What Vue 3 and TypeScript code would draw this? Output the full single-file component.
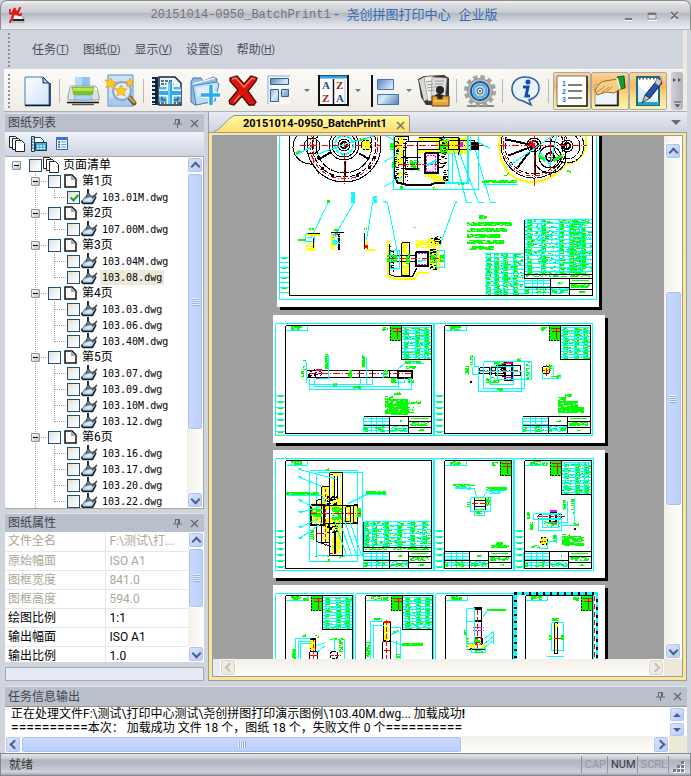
<script setup lang="ts">
import { ref } from 'vue'

interface TreeRow {
  level: 0 | 1 | 2
  label: string
  last?: boolean
  checked?: boolean
  selected?: boolean
}
interface Shape {
  d: string
  stroke: string
  fill: string
  width: number
  dash?: string
}

const pages: [string, string[]][] = [
  ['第1页', ['103.01M.dwg']],
  ['第2页', ['107.00M.dwg']],
  ['第3页', ['103.04M.dwg', '103.08.dwg']],
  ['第4页', ['103.03.dwg', '103.06.dwg', '103.40M.dwg']],
  ['第5页', ['103.07.dwg', '103.09.dwg', '103.10M.dwg', '103.12.dwg']],
  ['第6页', ['103.16.dwg', '103.17.dwg', '103.20.dwg', '103.22.dwg']],
]
const rows = ref<TreeRow[]>([{ level: 0, label: '页面清单' }])
for (const [name, files] of pages) {
  rows.value.push({ level: 1, label: name })
  files.forEach((f, i) =>
    rows.value.push({
      level: 2,
      label: f,
      last: i === files.length - 1,
      checked: f === '103.01M.dwg',
      selected: f === '103.08.dwg',
    }),
  )
}

const menus = [
  { name: '任务', key: 'T' },
  { name: '图纸', key: 'D' },
  { name: '显示', key: 'V' },
  { name: '设置', key: 'S' },
  { name: '帮助', key: 'H' },
]

const props = [
  { name: '文件全名', value: 'F:\\测试\\打...', locked: true },
  { name: '原始幅面', value: 'ISO A1', locked: true },
  { name: '图框宽度', value: '841.0', locked: true },
  { name: '图框高度', value: '594.0', locked: true },
  { name: '绘图比例', value: '1:1', locked: false },
  { name: '输出幅面', value: 'ISO A1', locked: false },
  { name: '输出比例', value: '1.0', locked: false },
]

/* Scroll ranges: space before the thumb, the thumb, space after it */
const scroll = {
  tree: [0, 255, 62],
  props: [0, 58, 38],
  view: [132, 213, 137],
  log: [0, 440, 191],
}

/* ---------- sheet drawing ---------- */
const C = '#00ffff'
const K = '#000000'
const G = '#00ff00'
const R = '#ff0000'
const Y = '#ffff00'
const M = '#ff00ff'
const shapes: Shape[] = []

let seed = 7
function rnd(): number {
  seed = (seed * 16807) % 2147483647
  return seed / 2147483647
}
function path(color: string, d: string, width = 1, dash?: string) {
  shapes.push({ d, stroke: color, fill: 'none', width, dash })
}
function line(color: string, pts: number[], width = 1, dash?: string) {
  let d = ''
  for (let i = 0; i < pts.length; i += 2) d += (i ? 'L' : 'M') + (pts[i] + 0.5) + ' ' + (pts[i + 1] + 0.5)
  path(color, d, width, dash)
}
function box(color: string, x0: number, y0: number, x1: number, y1: number, width = 1, dash?: string) {
  line(color, [x0, y0, x1, y0, x1, y1, x0, y1, x0, y0], width, dash)
}
function fill(color: string, x: number, y: number, w: number, h: number) {
  shapes.push({ d: `M${x} ${y}h${w}v${h}h${-w}z`, stroke: 'none', fill: color, width: 0 })
}
function circle(color: string, cx: number, cy: number, r: number, width = 1, dash?: string) {
  path(color, `M${cx - r} ${cy}a${r} ${r} 0 1 0 ${2 * r} 0a${r} ${r} 0 1 0 ${-2 * r} 0`, width, dash)
}
/* Speckled run of pixels: lettering and hatching at this scale */
function speck(color: string, x: number, y: number, w: number, h: number, density = 0.7) {
  let d = ''
  for (let j = 0; j < h; j++) {
    let i = 0
    while (i < w) {
      const n = Math.min(w - i, 1 + Math.floor(rnd() * 3))
      if (rnd() < density) d += `M${x + i} ${y + j + 0.5}h${n}`
      i += n
    }
  }
  path(color, d)
}
function table(x0: number, y0: number, x1: number, y1: number, step: number, cols: number[]) {
  for (const c of cols) speck(G, x0 + c, y0 + 1, 4, y1 - y0 - 1, 0.72)
  speck(G, x0 + 1, y0 + 1, x1 - x0 - 1, y1 - y0 - 1, 0.15)
  for (let y = y0; y <= y1; y += step) line(C, [x0, y, x1, y])
  for (const c of cols) line(C, [x0 + c - 1, y0, x0 + c - 1, y1])
}
function titleBlock(x1: number, y1: number, extra: boolean) {
  const x0 = x1 - 68
  const y0 = y1 - 17
  for (let y = y0 + 2; y < y1; y += 3) line(C, [x0, y, x0 + 26, y])
  for (const c of [0, 8, 13, 19]) line(C, [x0 + c, y0, x0 + c, y1])
  speck(C, x0 + 27, y0 + 10, 18, 6, 0.5)
  speck(G, x0 + 1, y0 + 11, 4, 5, 0.7)
  speck(G, x0 + 12, y0 + 10, 10, 6, 0.35)
  speck(G, x0 + 34, y0 + 4, 5, 2)
  speck(G, x0 + 28, y0 + 12, 16, 3, 0.5)
  line(G, [x0 + 47, y0 + 2, x1 - 4, y0 + 2])
  speck(G, x0 + 47, y0 + 6, 19, 4, 0.65)
  speck(G, x0 + 55, y0 + 13, 6, 2)
  line(K, [x0, y0, x1, y0])
  line(K, [x0, y0 + 9, x0 + 45, y0 + 9])
  line(K, [x0 + 26, y0, x0 + 26, y1])
  line(K, [x0 + 45, y0, x0 + 45, y1])
  line(K, [x0 + 45, y0 + 5, x1, y0 + 5])
  line(K, [x0 + 45, y0 + 11, x1, y0 + 11])
  if (extra) {
    speck(G, x0 + 2, y0 - 3, 64, 2, 0.5)
    line(K, [x0, y0 - 4, x1, y0 - 4])
  }
}
/* A bordered drawing: outer trim line, inner frame, side strip and title block */
function frame(x: number, y: number, outer: number, x1: number, gear: 'table' | 'stamp' | 'none', extra = false) {
  const y1 = y + 110
  box(C, x, y, outer, y + 112)
  for (let i = 0; i < 7; i++) {
    line(C, [x, y + 72 + i * 6, x + 10, y + 72 + i * 6])
    line(G, [x + 2, y + 73 + i * 6, x + 7, y + 73 + i * 6])
  }
  line(C, [x + 10, y + 7, x + 32, y + 7, x + 32, y + 2])
  speck(G, x + 16, y + 3, 11, 4, 0.75)
  if (gear !== 'none') {
    const sx = gear === 'table' ? x1 - 41 : x1 - 11
    fill(G, sx, y + 3, 11, 15)
    line(R, [sx + 1, y + 5, sx + 10, y + 5])
    line(R, [sx + 2, y + 8, sx + 10, y + 8])
    line(R, [sx + 7, y + 4, sx + 7, y + 15])
    line(K, [sx, y + 3, sx, y + 17, sx + 10, y + 17], 1, '2 1')
    speck(G, sx - 8, y + 4, 6, 4, 0.7)
  }
  if (gear === 'table') {
    table(x1 - 30, y + 4, x1, y + 36, 3, [4, 15, 24])
    line(K, [x1 - 30, y + 2, x1 - 30, y + 36, x1, y + 36])
  }
  titleBlock(x1, y1, extra)
  box(K, x + 10, y + 2, x1, y1)
}
function sheet(x: number, y: number, w: number, h: number) {
  fill(K, x + 3, y + 3, w, h)
  fill('#ffffff', x, y, w, h)
}

/* Sheet 1: gearbox assembly */
sheet(277, 100, 322, 207)
line(C, [279, 130, 279, 299, 596, 299, 596, 130])
for (let i = 0; i < 8; i++) {
  line(C, [279, 257 + i * 5, 289, 257 + i * 5])
  if (i % 2 === 0) line(G, [281, 258 + i * 5, 286, 258 + i * 5], 1)
}
circle(K, 344, 145, 37)
circle(K, 344, 145, 28, 1, '9 1')
circle(K, 344, 145, 32, 1, '5 2')
circle(R, 344, 145, 34, 1, '5 2 1 2')
circle(K, 344, 145, 15)
circle(K, 344, 145, 12)
circle(C, 344, 145, 9, 2, '4 1')
circle(K, 344, 145, 6)
circle(K, 344, 145, 3, 2)
path(K, 'M304 130A19 19 0 0 0 293 148C294 158 303 165 313 164L319 174')
circle(K, 312, 146, 8)
path(R, 'M313 130V163', 1, '5 2')
line(K, [344, 160, 344, 175], 2)
line(K, [330, 152, 318, 159], 2)
line(K, [359, 153, 369, 159], 2)
for (const [a, b] of [[318, 157], [322, 168], [332, 175], [357, 175], [369, 167], [374, 157]]) fill(K, a - 1, b - 1, 3, 3)
line(R, [299, 145, 380, 145], 1, '6 2 1 2')
line(R, [344, 130, 344, 184], 1, '6 2 1 2')
speck(Y, 362, 141, 9, 9, 0.9)
circle(K, 366, 145, 5, 1, '3 1')
line(C, [296, 154, 312, 146])
line(C, [316, 154, 344, 144, 382, 133])
line(G, [296, 153, 300, 150], 2)
speck(G, 360, 138, 6, 3)

box(C, 393, 130, 478, 189)
speck(Y, 396, 137, 8, 27, 0.85)
speck(Y, 418, 137, 50, 17, 0.85)
speck(Y, 424, 153, 13, 24, 0.8)
speck(Y, 431, 176, 15, 8, 0.8)
speck(Y, 398, 164, 7, 17, 0.5)
speck(G, 390, 143, 4, 7, 0.9)
speck(G, 392, 162, 4, 6, 0.9)
speck(G, 410, 160, 10, 11, 0.6)
speck(G, 440, 138, 8, 16, 0.6)
speck(K, 394, 136, 5, 44, 0.3)
speck(K, 403, 137, 5, 44, 0.3)
speck(K, 439, 136, 8, 33, 0.2)
speck(K, 443, 170, 5, 13, 0.45)
line(K, [394, 136, 408, 136, 408, 141])
line(K, [394, 136, 394, 176])
line(K, [403, 150, 403, 182])
fill('#ffffff', 409, 142, 27, 7)
box(K, 405, 141, 417, 169)
box(K, 417, 141, 439, 149)
fill('#ffffff', 425, 153, 12, 20)
box(K, 424, 152, 437, 172, 2)
box(K, 448, 140, 474, 149)
line(K, [458, 137, 458, 154], 2)
line(K, [418, 137, 458, 137])
line(K, [394, 176, 397, 182, 405, 184, 431, 184, 436, 182, 445, 182], 2)
line(K, [400, 157, 420, 157])
line(K, [400, 168, 418, 168])
fill(K, 470, 142, 9, 8)
line(R, [394, 145, 482, 145], 1, '7 2 1 2')
line(R, [397, 164, 438, 164], 1, '5 1')
box(M, 426, 155, 435, 171, 1, '2 1')
fill(M, 460, 142, 3, 5)
line(C, [426, 165, 436, 160], 2)
box(C, 448, 153, 452, 182)
line(C, [467, 130, 467, 182, 444, 182], 2)
line(C, [470, 130, 470, 150])
for (const [a, b, c2] of [[466, 202, 453], [478, 202, 458], [490, 202, 475]]) line(C, [c2, 150, a, b, a + 5, b])
line(C, [384, 135, 393, 139])
line(C, [384, 161, 399, 153])
line(C, [384, 186, 402, 176])
line(C, [478, 142, 490, 148])
speck(G, 482, 180, 35, 3, 0.9)
line(C, [482, 184, 517, 184])
speck(G, 400, 186, 3, 3)
speck(G, 433, 187, 5, 3)
speck(G, 458, 183, 6, 2)

path(Y, 'M500 136C498 151 500 164 510 174C521 184 539 184 551 177C560 172 562 168 567 164C578 163 586 153 586 143V134', 2)
circle(K, 534, 145, 33, 1, '10 1')
circle(K, 534, 145, 29, 1, '4 2')
circle(R, 534, 145, 31, 1, '5 2 1 2')
circle(K, 534, 145, 7)
circle(K, 534, 145, 4, 2)
circle(K, 550, 157, 16)
circle(K, 550, 157, 11)
circle(K, 550, 157, 4, 2)
circle(K, 567, 146, 17, 1, '8 1')
circle(K, 567, 146, 13, 1, '7 1')
circle(K, 567, 146, 6)
circle(K, 567, 146, 3, 2)
for (const [a, b] of [[506, 139], [508, 155], [517, 167], [534, 174]]) line(K, [534, 145, a, b], 2)
line(R, [499, 145, 586, 145], 1, '7 2 1 2')
line(R, [534, 130, 534, 185], 1, '7 2 1 2')
line(R, [550, 136, 550, 176], 1, '5 2')
line(R, [540, 157, 562, 157], 1, '5 2')
speck(R, 529, 141, 6, 8, 0.6)
line(G, [538, 155, 545, 160], 3)
line(G, [553, 160, 562, 155], 3)
line(C, [506, 167, 560, 130])
line(C, [538, 150, 551, 166])
line(C, [549, 167, 556, 136])
speck(G, 504, 173, 5, 3, 0.5)
speck(G, 567, 170, 4, 3, 0.5)

line(C, [328, 201, 311, 237, 306, 237])
line(C, [353, 203, 336, 232])
line(C, [375, 201, 372, 202, 366, 240])
line(C, [383, 201, 387, 202, 398, 257])
line(C, [457, 201, 455, 202, 438, 249])
speck(C, 351, 192, 4, 11, 0.9)
speck(C, 372, 196, 5, 7, 0.7)
speck(G, 327, 200, 3, 3, 0.9)
line(G, [308, 228, 313, 228], 2, '2 1')
line(G, [333, 229, 338, 229], 2)
line(G, [363, 228, 366, 228], 2, '1 1')
line(G, [412, 227, 415, 227], 1, '1 1')
box(C, 305, 233, 314, 241)
line(Y, [305, 234, 319, 234], 2)
speck(Y, 305, 243, 10, 8, 0.65)
line(K, [307, 233, 319, 233])
line(K, [313, 237, 313, 247])
line(G, [297, 239, 305, 239], 2)
speck(Y, 331, 232, 4, 19, 0.8)
speck(Y, 335, 232, 5, 4, 0.8)
line(K, [330, 232, 343, 232])
line(K, [338, 233, 338, 249], 2)
line(M, [334, 233, 337, 233], 2)
speck(C, 332, 233, 8, 12, 0.4)
line(K, [364, 232, 364, 248], 1)
line(Y, [366, 240, 366, 249, 374, 249], 2)
speck(R, 364, 245, 4, 4, 0.5)

line(Y, [387, 239, 387, 275, 393, 278, 414, 278, 418, 272, 428, 272], 2)
line(K, [389, 243, 389, 274, 395, 276, 412, 276, 416, 268])
speck(Y, 401, 242, 9, 33, 0.6)
speck(Y, 416, 240, 13, 8, 0.75)
speck(Y, 428, 238, 12, 32, 0.7)
box(K, 401, 242, 409, 275, 1)
box(K, 415, 251, 427, 265, 2)
box(K, 396, 255, 415, 261)
speck(K, 390, 246, 4, 26, 0.5)
speck(K, 431, 236, 10, 8, 0.45)
speck(K, 430, 249, 7, 21, 0.45)
speck(G, 387, 255, 10, 7, 0.7)
speck(G, 406, 254, 4, 10, 0.7)
speck(G, 430, 254, 7, 9, 0.7)
speck(G, 440, 254, 4, 8, 0.8)
box(C, 390, 250, 399, 268)
box(C, 436, 250, 444, 267)
line(M, [417, 253, 426, 253], 1, '2 1')
line(M, [417, 264, 426, 264], 1, '2 1')
line(R, [388, 258, 440, 258], 1, '6 2 1 2')
line(C, [418, 261, 425, 259], 2)

speck(G, 479, 215, 8, 4, 0.7)
for (const [ty, tx, tw] of [[222, 467, 45], [228, 467, 40], [234, 467, 33], [240, 467, 37], [246, 469, 25]]) speck(G, tx, ty, tw, 4, 0.8)
speck(C, 525, 220, 67, 54, 0.08)
speck(G, 573, 220, 9, 54, 0.6)
table(524, 219, 592, 274, 4, [4, 18, 36, 46, 58])
line(K, [524, 219, 524, 295])
table(484, 253, 523, 295, 4, [3, 11, 20, 30])
titleBlock(592, 295, true)
line(K, [289, 130, 289, 295, 592, 295, 592, 130])

/* Sheet 2: shaft and gear shaft */
sheet(273, 315, 332, 128)
frame(275, 323, 433, 431, 'table')
frame(434, 323, 592, 590, 'table')
box(K, 306, 370, 411, 377)
speck(K, 308, 369, 4, 9, 0.4)
speck(K, 314, 369, 8, 9, 0.4)
box(K, 397, 370, 411, 377, 2)
for (const a of [372, 359, 389]) line(K, [a, 370, a, 377])
line(R, [308, 373, 413, 373], 1, '7 2 1 2')
line(R, [315, 369, 321, 369])
line(M, [315, 370, 321, 370])
line(M, [315, 378, 321, 378])
line(C, [309, 378, 309, 389, 411, 389, 411, 378])
line(C, [314, 378, 314, 386, 398, 386, 398, 378])
line(C, [360, 378, 360, 384, 309, 384])
line(C, [306, 361, 306, 382])
line(C, [328, 354, 328, 378, 318, 378])
line(C, [366, 356, 366, 384])
line(C, [372, 377, 372, 384, 360, 384])
line(C, [383, 370, 383, 377])
line(C, [397, 369, 404, 363, 423, 363])
line(C, [390, 382, 404, 382, 404, 377])
speck(G, 303, 360, 3, 10)
speck(G, 325, 354, 3, 15)
speck(G, 362, 355, 3, 13)
speck(G, 301, 371, 3, 6)
speck(G, 348, 370, 3, 7)
speck(G, 350, 370, 2, 8)
speck(G, 384, 370, 4, 7)
speck(G, 333, 383, 4, 3)
speck(G, 353, 386, 8, 3)
speck(G, 405, 361, 16, 3)
speck(G, 406, 366, 10, 3)
speck(G, 391, 378, 5, 5)
speck(G, 408, 378, 6, 5, 0.5)
speck(G, 394, 392, 7, 3)
speck(G, 385, 396, 8, 4, 0.8)
speck(G, 385, 399, 23, 16, 0.85)
speck(G, 407, 401, 14, 3)
speck(G, 407, 407, 7, 6, 0.6)

box(K, 479, 367, 503, 373)
box(K, 504, 361, 511, 379, 2)
box(K, 489, 367, 491, 374, 1)
box(K, 495, 365, 520, 375)
speck(K, 500, 363, 4, 14, 0.4)
line(M, [503, 363, 512, 363])
line(M, [503, 377, 512, 377])
line(R, [505, 362, 511, 362])
line(R, [478, 370, 522, 370], 1, '6 2 1 2')
box(C, 478, 371, 521, 391)
box(C, 483, 361, 524, 388)
box(C, 490, 366, 513, 384)
box(C, 497, 361, 531, 379)
box(C, 472, 366, 478, 374)
line(C, [474, 355, 474, 366])
speck(G, 470, 355, 3, 11)
speck(G, 465, 366, 4, 9)
speck(G, 526, 362, 4, 17, 0.6)
speck(G, 517, 358, 4, 4)
speck(G, 497, 388, 6, 3)
speck(G, 486, 377, 14, 8, 0.4)
speck(G, 494, 361, 10, 4, 0.5)
fill(K, 470, 381, 2, 2)
speck(Y, 543, 366, 7, 8, 0.95)
circle(K, 546, 370, 4, 1)
line(R, [546, 364, 546, 376], 1, '2 1')
line(R, [542, 370, 551, 370], 1, '2 1')
line(C, [542, 371, 542, 378, 560, 378])
line(C, [551, 366, 553, 366, 553, 374])
speck(G, 549, 364, 3, 5)
speck(G, 551, 375, 10, 3, 0.6)
speck(G, 565, 394, 7, 3)
speck(G, 558, 397, 8, 6, 0.8)
speck(G, 558, 401, 20, 12, 0.8)
speck(G, 558, 407, 26, 6, 0.8)

/* Sheet 3: wheel assembly, nut and pinion */
sheet(273, 450, 332, 128)
table(363, 521, 431, 547, 4, [2, 10, 22, 35, 48, 60])
line(K, [363, 521, 363, 568])
frame(275, 458, 433, 431, 'none', true)
frame(434, 458, 513, 511, 'stamp')
frame(514, 458, 593, 591, 'table')
box(C, 309, 470, 357, 561)
box(C, 316, 472, 362, 555)
speck(Y, 322, 487, 8, 54, 0.8)
speck(Y, 332, 473, 9, 80, 0.85)
speck(Y, 312, 503, 32, 20, 0.85)
speck(Y, 342, 505, 14, 18, 0.8)
fill('#ffffff', 334, 475, 6, 22)
fill('#ffffff', 317, 526, 6, 14)
fill('#ffffff', 320, 510, 28, 8)
box(K, 329, 472, 342, 555, 1)
box(K, 321, 486, 329, 542, 1)
box(K, 310, 504, 323, 524, 2)
box(K, 323, 505, 357, 523, 1)
box(K, 345, 506, 350, 521, 1)
box(K, 353, 504, 357, 522)
line(K, [316, 503, 316, 500, 322, 498])
line(K, [316, 524, 316, 541, 331, 546])
line(K, [334, 475, 334, 498])
line(K, [337, 475, 337, 498])
line(K, [334, 530, 334, 553], 2)
speck(K, 327, 496, 10, 9, 0.5)
speck(K, 327, 522, 11, 11, 0.5)
speck(G, 311, 509, 11, 8, 0.75)
speck(G, 332, 507, 10, 13, 0.7)
speck(G, 357, 508, 4, 9, 0.9)
line(R, [309, 513, 360, 513], 1, '7 2 1 2')
line(R, [325, 488, 325, 545], 1, '3 2')
line(R, [315, 533, 323, 533])
line(R, [328, 474, 332, 474])
line(R, [328, 553, 332, 553])
for (const [a, b, c2, e] of [[299, 469, 337, 479], [299, 477, 321, 486], [299, 500, 312, 506], [299, 512, 320, 506], [299, 527, 318, 518], [299, 538, 322, 522]]) line(C, [a, b, c2, e])
for (const a of [469, 477, 500, 512, 527, 538]) line(C, [298, a - 1, 302, a])
for (const a of [346, 351, 356, 361]) line(C, [a - 12, 520, a, 555])
line(C, [348, 503, 366, 494, 386, 494])
line(C, [286, 495, 321, 495, 327, 505])
speck(G, 286, 492, 33, 3, 0.9)
speck(G, 366, 491, 20, 3, 0.9)
speck(G, 310, 530, 4, 10, 0.5)
speck(G, 325, 559, 5, 3)
speck(G, 315, 556, 33, 2, 0.3)
speck(G, 325, 468, 4, 3)

fill('#ffffff', 475, 500, 10, 7)
line(Y, [475, 498, 485, 498], 2, '3 1')
line(Y, [475, 508, 485, 508], 2, '3 1')
box(K, 474, 497, 485, 509, 1)
line(K, [474, 500, 485, 500])
line(K, [474, 506, 485, 506])
line(R, [471, 503, 488, 503], 1, '6 2')
box(C, 470, 497, 490, 511)
box(C, 474, 509, 484, 515)
line(C, [455, 488, 474, 488, 476, 497])
line(C, [481, 499, 487, 490, 505, 490])
speck(G, 453, 484, 22, 3, 0.75)
speck(G, 486, 487, 21, 3, 0.75)
speck(C, 455, 487, 16, 3, 0.4)
speck(C, 489, 490, 12, 4, 0.4)
speck(G, 467, 501, 3, 6)
speck(G, 476, 511, 6, 3)
speck(G, 486, 497, 4, 10, 0.5)
speck(G, 496, 542, 7, 3)
speck(G, 491, 545, 18, 3, 0.8)

box(K, 549, 512, 555, 521, 2)
line(M, [549, 510, 556, 510], 2)
line(M, [549, 522, 556, 522], 2)
box(K, 538, 514, 561, 519, 1, '3 2')
line(R, [536, 516, 564, 516], 1, '5 1')
box(C, 533, 513, 560, 519)
box(C, 538, 518, 561, 530)
box(C, 542, 514, 558, 527)
line(C, [567, 500, 567, 522, 557, 522])
line(C, [574, 497, 574, 522])
line(C, [560, 525, 578, 525])
speck(G, 563, 500, 3, 10)
speck(G, 571, 499, 3, 15)
speck(G, 527, 512, 3, 7)
speck(G, 530, 521, 3, 9)
speck(G, 544, 521, 16, 6, 0.4)
speck(G, 573, 523, 6, 3)
fill(K, 574, 528, 2, 2)
speck(Y, 541, 538, 7, 7, 0.9)
circle(K, 544, 541, 4, 1, '2 2')
line(R, [540, 541, 549, 541], 1, '2 1')
line(C, [538, 548, 547, 548, 547, 541, 556, 541])
line(C, [556, 534, 556, 542])
speck(G, 531, 545, 9, 3)
speck(G, 553, 534, 3, 7)
speck(G, 562, 534, 8, 12, 0.8)
speck(G, 568, 536, 16, 10, 0.65)

/* Sheet 4: pins and bushes; the last drawing is selected */
sheet(273, 585, 332, 128)
frame(275, 593, 353, 352, 'table')
frame(355, 593, 433, 432, 'table')
frame(435, 593, 513, 512, 'none')
frame(515, 593, 593, 592, 'stamp')
box(K, 310, 640, 315, 651)
speck(Y, 309, 640, 6, 10, 0.85)
fill('#ffffff', 309, 651, 9, 10)
box(K, 309, 651, 317, 662, 1)
line(R, [309, 655, 317, 655])
line(R, [313, 637, 313, 662], 1, '4 2')
fill(K, 310, 638, 6, 2)
line(C, [295, 662, 295, 638, 310, 638])
line(C, [298, 662, 298, 641, 310, 641])
line(C, [300, 662, 300, 643, 310, 643])
line(C, [316, 645, 325, 642])
line(C, [316, 652, 325, 645])
line(C, [344, 638, 344, 662])
line(C, [334, 638, 334, 652])
circle(K, 334, 655, 4, 1, '3 1')
line(R, [329, 655, 340, 655], 1, '4 1')
speck(G, 302, 634, 4, 3)
speck(G, 315, 635, 4, 3)
speck(G, 292, 649, 4, 11)
speck(G, 330, 638, 14, 2, 0.7)
speck(G, 339, 640, 4, 12, 0.6)

box(K, 383, 622, 390, 640)
speck(Y, 384, 623, 5, 18, 0.8)
fill(R, 383, 621, 8, 2)
box(K, 382, 641, 390, 662, 1)
line(R, [386, 619, 386, 662], 1, '5 2')
line(R, [383, 650, 390, 650])
line(C, [370, 662, 370, 621, 383, 621])
line(C, [373, 662, 373, 625, 383, 625])
line(C, [390, 627, 400, 627, 400, 662])
line(C, [391, 634, 399, 630])
line(C, [391, 641, 403, 645])
line(C, [396, 640, 396, 662])
speck(G, 374, 618, 8, 3, 0.8)
speck(G, 366, 642, 4, 15)
speck(G, 393, 630, 5, 3)
speck(G, 402, 643, 21, 3, 0.9)
speck(G, 396, 652, 4, 6)

box(K, 474, 608, 481, 637)
fill(K, 474, 607, 8, 3)
line(K, [474, 620, 481, 620], 2)
line(M, [472, 627, 483, 627], 1, '4 1')
line(M, [472, 630, 483, 630], 1, '4 1')
line(K, [475, 637, 475, 643, 471, 648, 484, 648, 481, 643, 481, 637], 2)
speck(R, 474, 637, 8, 8, 0.4)
speck(Y, 470, 644, 5, 4, 0.8)
speck(Y, 482, 644, 5, 4, 0.8)
line(R, [477, 609, 477, 647], 1, '5 2')
box(C, 466, 608, 474, 643)
line(C, [466, 621, 474, 621])
box(C, 471, 648, 485, 652)
line(C, [482, 617, 487, 610, 505, 610])
for (const a of [632, 637, 641]) line(C, [484, a + 6, 493, a - 1])
line(C, [493, 630, 493, 643])
speck(G, 487, 609, 19, 2, 0.9)
speck(G, 464, 630, 2, 5)
speck(G, 466, 638, 3, 12, 0.7)
speck(G, 475, 650, 8, 3, 0.7)
speck(G, 474, 639, 7, 6, 0.4)

box(C, 551, 622, 563, 650)
box(K, 554, 622, 557, 653, 1)
line(Y, [555, 625, 555, 650])
line(Y, [556, 623, 556, 626], 2)
line(R, [553, 638, 562, 638])
line(C, [546, 656, 563, 656])
speck(G, 552, 618, 7, 3)
speck(G, 549, 635, 3, 6)
speck(G, 561, 635, 3, 6)
line(R, [594, 595, 594, 662], 1, '5 3')
line(K, [515, 662, 515, 593, 595, 593], 3)
line(K, [596, 593, 596, 662], 2)
line(C, [515, 662, 515, 593, 597, 593], 3, '5 2')
line(C, [596, 593, 596, 662], 2, '5 3')
</script>

<template>
  <div class="app">
    <header class="titlebar">
      <svg class="logo" viewBox="0 0 16 16" width="16" height="16">
        <path d="M5 8h7l3 4v3H3z" fill="#eee" stroke="#777" stroke-width=".7" />
        <path d="M4 12h11v2H4z" fill="#222" />
        <path d="M1 3c-1 4 1 5 3 2L6 1C5 6 3 12 1 15M7 4c-1 4 1 4 2 1l2-4M9 5c0 4 2 4 3 2" fill="none" stroke="#e01414" stroke-width="2" stroke-linecap="round" />
      </svg>
      <h1 class="caption"><span class="doc">20151014-0950_BatchPrint1</span><span class="dash">-</span><span>尧创拼图打印中心</span><span>企业版</span></h1>
      <div class="winbtns">
        <button aria-label="最小化"><svg viewBox="0 0 12 12" width="12" height="12"><path d="M2 9h7" stroke="#777" stroke-width="2" /><path d="M2 10.500h7" stroke="#fff" /></svg></button>
        <button aria-label="最大化"><svg viewBox="0 0 12 12" width="12" height="12"><path d="M2 3h8v6H2z" fill="#ddd" stroke="#888" /><path d="M2 4h8" stroke="#777" stroke-width="2" /><path d="M2 10.500h9" stroke="#fff" /></svg></button>
        <button aria-label="关闭"><svg viewBox="0 0 12 12" width="12" height="12"><path d="M2 3l7 7M9 3l-7 7" stroke="#fff" stroke-width="2" /><path d="M2 2l7 7M9 2l-7 7" stroke="#777" stroke-width="2" /></svg></button>
      </div>
    </header>

    <nav class="menubar">
      <span class="grip"></span>
      <button v-for="m in menus" :key="m.key" class="menu">{{ m.name }}<small>(<u>{{ m.key }}</u>)</small></button>
    </nav>

    <div class="toolbar">
      <span class="grip"></span>
      <button class="tool" aria-label="新建">
        <svg viewBox="0 0 32 32"><defs><linearGradient id="paper" x1="0" y1="0" x2="1" y2="1"><stop offset="0" stop-color="#fff" /><stop offset="1" stop-color="#cfe2f8" /></linearGradient></defs><path d="M4 2h18l6 6v22H4z" fill="url(#paper)" stroke="#3b7cc9" /><path d="M4 30.500h25V8" fill="none" stroke="#0a1a3a" stroke-width="1.500" /><path d="M22 2v6h6z" fill="#9cc8ee" stroke="#112a58" /></svg>
      </button>
      <i class="sep"></i>
      <button class="tool" aria-label="打印">
        <svg viewBox="0 0 32 32"><path d="M8 2h15v12H8z" fill="#8fc4ee" /><path d="M8 2h7v12H8z" fill="#b5dbf7" /><path d="M3 13q0-2 2-2h22q2 0 3 2l2 8v4H1v-4z" fill="#e2e2e4" stroke="#8c8c90" stroke-width=".8" /><path d="M5 12h22l-1 8H6z" fill="#7fc320" /><path d="M6 13h20l-.5 3h-19z" fill="#b6e35a" /><path d="M8 20h16l1 5H7z" fill="#a9d4f4" stroke="#5d97cc" stroke-width=".6" /><path d="M27 14h3" stroke="#fff" stroke-width="2" /><path d="M0 27.500h32" stroke="#111" stroke-width="1.500" /><path d="M5 29.500h22" stroke="#555" stroke-width="1.500" /></svg>
      </button>
      <button class="tool" aria-label="打印预览">
        <svg viewBox="0 0 32 32"><path d="M3 0h25v31H3z" fill="#cfe0f7" stroke="#4f8fd8" /><path d="M4 24l24-9v15H4z" fill="#a7c8f0" /><path d="M25 23l4 5" stroke="#5e5a50" stroke-width="5" stroke-linecap="round" /><path d="M25 23l4 4" stroke="#d79a35" stroke-width="2.500" stroke-linecap="round" /><circle cx="17" cy="16" r="9" fill="#dcecfb" stroke="#8aa3c0" stroke-width="2" /><g fill="#fdc91a" stroke="#e0950a" stroke-width=".6"><path d="M6 3l1.500 3.500L12 7 8.500 9.500 10 14l-4.500-2.500L1 13l1.500-4.500L0 5l4 .5z" /><path d="M16 10l2 3.500 4 .5-3 3 1 4-4-2-4 2 1-4-3-3 4-.5z" /><path d="M25 3l1 3 3 .5-2 2 .5 3-2.500-1.500-3 1.500.5-3-2-2 3-.5z" /></g></svg>
      </button>
      <i class="sep"></i>
      <button class="tool" aria-label="添加图纸">
        <svg viewBox="0 0 32 32"><path d="M0 1h31v30H0z" fill="#fff" /><path d="M1 2h6v28H1z" fill="#152636" /><path d="M2.500 4v25" stroke="#d8edf8" stroke-width="3" stroke-dasharray="2 2" /><path d="M8 2h16l6 6v22H8z" fill="#e9f5fb" stroke="#152636" stroke-width="1.500" /><path d="M8 12h22v15H8z" fill="#5fb2dc" /><path d="M10 6h11M10 9h13M10 28h19" stroke="#2b4a60" stroke-width="1.500" stroke-dasharray="3 1" /><path d="M11 16v9h16v-9" fill="none" stroke="#184563" /><path d="M19 7v22M8 18h22" stroke="#fff" stroke-width="7" /><path d="M19 7v22M8 18h22" stroke="#29aef0" stroke-width="4" /><path d="M18 8v21" stroke="#8edcff" stroke-width="1.500" /></svg>
      </button>
      <button class="tool" aria-label="添加文件夹">
        <svg viewBox="0 0 32 32"><path d="M2 7l2-4h8l2 3 11-4 3 2-2 22-20 4-4-3z" fill="#8fbde6" stroke="#47759f" /><path d="M4 9l22-6" stroke="#e9f5ff" stroke-width="1.500" /><path d="M4 11l4-1 20-3 2 2-4 17-19 4z" fill="#bddcf5" stroke="#4f86b8" /><path d="M7 13l20-4-2 7-17 5z" fill="#ddeffc" /><path d="M22 10v20M12 20h19" stroke="#fff" stroke-width="5.500" /><path d="M22 10v20M12 20h19" stroke="#2aaaf0" stroke-width="3.500" /></svg>
      </button>
      <button class="tool" aria-label="删除">
        <svg viewBox="0 0 32 32"><path d="M3 3l7-2 7 8 7-8 6 2-1 3-8 10 8 11-2 3-5 0-7-9-8 9-4-1-1-3 9-11-8-9z" fill="#d81508" stroke="#4a0805" stroke-width="1.300" /><path d="M5 4l4-1 8 9 8-9 3 1M7 27l6-7" fill="none" stroke="#f8765f" stroke-width="1.500" /></svg>
      </button>
      <button class="tool" aria-label="布局">
        <svg viewBox="0 0 32 32"><defs><linearGradient id="tile" x1="0" y1="0" x2="1" y2="1"><stop offset="0" stop-color="#4f86c0" /><stop offset=".5" stop-color="#d8e9f7" /><stop offset="1" stop-color="#4c83bd" /></linearGradient></defs><path d="M3 1h22v28H3z" fill="#f8fafc" /><path d="M3 29V1h22" fill="none" stroke="#8ba8c6" /><g fill="url(#tile)" stroke="#2e6094"><path d="M5.500 3.500h18v6h-18zM5.500 14.500h8v12h-8zM16.500 14.500h7v7h-7z" /></g></svg>
      </button>
      <button class="drop" aria-label="布局选项"></button>
      <button class="tool" aria-label="排序">
        <svg viewBox="0 0 32 32"><path d="M3 1h29v29H3z" fill="#fff" stroke="#111" stroke-width="2" /><path d="M4 2h27" stroke="#29a0dd" stroke-width="3" /><path d="M17.500 4v25" stroke="#111" stroke-width="1.500" /><path d="M29 5v24" stroke="#a9c3da" /><g font-family="Liberation Serif, serif" font-weight="bold" font-size="11"><text x="6" y="14" fill="#1d5184">A</text><text x="6" y="27" fill="#a51e14">Z</text><text x="20" y="14" fill="#a51e14">Z</text><text x="20" y="27" fill="#1d5184">A</text></g></svg>
      </button>
      <button class="drop" aria-label="排序选项"></button>
      <button class="tool" aria-label="对齐">
        <svg viewBox="0 0 34 32" class="wide"><path d="M6 0v32" stroke="#111" stroke-width="2" /><g fill="url(#tile)" stroke="#4078b4"><path d="M11.500 4.500h16v10h-16zM11.500 19.500h21v10h-21z" /></g></svg>
      </button>
      <button class="drop" aria-label="对齐选项"></button>
      <button class="tool" aria-label="图纸权限">
        <svg viewBox="0 0 32 32"><path d="M0 4l6-3 20-1 5 3v27H8L3 22z" fill="#363636" /><path d="M1 5l5-3 5 22-5 2z" fill="#d9d9d7" /><path d="M6 2l9-1 4 24-9 1z" fill="#f3f3f1" stroke="#888" stroke-width=".6" /><path d="M14 2l15 1-2 22-14-1z" fill="#ddd" stroke="#888" stroke-width=".6" /><path d="M8 7l6-1M9 10l6-1M9 13l6-1M10 16l6-1M17 6h9M17 9h8M16 12h8" stroke="#999" stroke-width="1.200" /><circle cx="22" cy="15" r="4" fill="#222" /><path d="M16 23q1-5 6-4t6 4v3H16z" fill="#222" /><path d="M14 21h5l1 3h4l1-3h6v10H14z" fill="#e3a336" stroke="#65400c" /><path d="M15 26h15" stroke="#f8d685" /></svg>
      </button>
      <i class="sep"></i>
      <button class="tool" aria-label="设置">
        <svg viewBox="0 0 32 32"><path d="M3 31h27" stroke="#222" /><circle cx="16" cy="16" r="14" fill="none" stroke="#a0a4a6" stroke-width="4" stroke-dasharray="4.330 3" /><circle cx="16" cy="16" r="12.500" fill="#b4b8ba" stroke="#8d9294" /><circle cx="16" cy="16" r="9" fill="#e4f4fc" stroke="#155895" stroke-width="2" /><circle cx="16" cy="16" r="6.500" fill="#a9d8f5" stroke="#56a4dc" stroke-width="2" /><circle cx="16" cy="16" r="3" fill="#eee" stroke="#555" /><circle cx="16" cy="16" r="1" fill="#333" /></svg>
      </button>
      <i class="sep"></i>
      <button class="tool" aria-label="关于">
        <svg viewBox="0 0 32 32"><path d="M15 2C6 2 2 8 2 14c0 6 4 11 11 12l8 4-2-5c6-2 10-6 10-12C29 6 23 2 15 2z" fill="#e8f3fd" stroke="#2a5f9d" stroke-width="1.500" /><circle cx="18" cy="7" r="2.500" fill="#1549ae" /><path d="M13 12h5l-2 9h4" fill="none" stroke="#1549ae" stroke-width="3" /></svg>
      </button>
      <i class="sep"></i>
      <button class="tool on" aria-label="图纸列表" aria-pressed="true">
        <svg viewBox="0 0 32 32"><path d="M1 1h30v30H1z" fill="#fff" /><path d="M1 31V1h30" fill="none" stroke="#777" /><path d="M31 1v30H1" fill="none" stroke="#111" stroke-width="1.500" /><path d="M12 10h14M12 16h14M12 23h14" stroke="#555" stroke-width="1.300" /><g font-family="Liberation Sans, sans-serif" font-weight="bold" font-size="7" fill="#1478c8"><text x="6" y="11">1</text><text x="6" y="19">2</text><text x="6" y="27">3</text></g></svg>
      </button>
      <button class="tool on" aria-label="图纸属性" aria-pressed="true">
        <svg viewBox="0 0 32 32"><path d="M1 10h22v20H1z" fill="#eef3fb" stroke="#99a" /><path d="M1 30.500h23V10" fill="none" stroke="#111" stroke-width="1.500" /><path d="M1 15q5-9 10-9l12-2 5 9-8 5-8-1-9 3z" fill="#f6cf87" stroke="#9d6b1e" /><path d="M3 17l8-6M7 18l8-6M12 17l6-5" stroke="#c38a3c" fill="none" /><path d="M23 2l7-1 1 12-5 1z" fill="#159a2a" stroke="#075c14" /><path d="M23 3l3 11" stroke="#fff" stroke-width="1.500" /></svg>
      </button>
      <button class="tool on" aria-label="任务信息" aria-pressed="true">
        <svg viewBox="0 0 32 32"><path d="M5 2h22v28H5z" fill="#fff" stroke="#0d6e90" stroke-width="2" /><path d="M6 27h21v3H6z" fill="#27a4c4" /><path d="M6 10l20 17H6z" fill="#dcebf2" /><path d="M7 3h18" stroke="#555" stroke-width="3" stroke-dasharray="1.500 2" /><path d="M27 3l3-1-1 7z" fill="#999" /><path d="M27 3l3 5-12 15-5-3z" fill="#2558a0" stroke="#0e2c60" /><path d="M25 3l5 3-3 5-4-3z" fill="#ccc" stroke="#555" stroke-width=".6" /><path d="M13 20l5 3-8 5z" fill="#b8bcc4" stroke="#222" stroke-width=".8" /></svg>
      </button>
      <span class="fill"></span>
      <button class="more" aria-label="更多"><svg viewBox="0 0 12 38" width="12" height="38"><path d="M2 6l3 2-3 2zM7 6l3 2-3 2z" fill="#555" /><path d="M3 30h7" stroke="#555" /><path d="M3 32h7l-3.500 4z" fill="#555" stroke="#fff" stroke-width=".4" /></svg></button>
    </div>

    <div class="workspace">
      <aside class="side">
        <section class="panel list">
          <h2 class="phead"><span>图纸列表</span>
            <button aria-label="固定列表"><svg viewBox="0 0 9 9" width="9" height="9"><path d="M2 .5h4.500v4M2.500 .5v4M0 5h9M4.500 5v4M5.500 1v4" fill="none" stroke="#666" /></svg></button>
            <button aria-label="关闭列表"><svg viewBox="0 0 9 9" width="9" height="9"><path d="M1 1l7 7M8 1l-7 7" stroke="#666" stroke-width="1.300" /></svg></button>
          </h2>
          <div class="ptools">
            <button aria-label="页面视图"><svg viewBox="0 0 17 16" width="17" height="16"><g fill="#fff" stroke="#222"><path d="M.5 .5h6l3 3v8h-9z" /><path d="M3.500 2.500h6l3 3v8h-9z" /><path d="M6.500 4.500h6l3 3v8h-9z" /></g></svg></button>
            <button aria-label="图纸视图"><svg viewBox="0 0 17 16" width="17" height="16"><path d="M.5 .5h3v15h-3z" fill="#cfe6f2" stroke="#153f60" /><path d="M3.500 1.500h6l3 3v6h-9z" fill="#fff" stroke="#153f60" /><path d="M4.500 6.500h11v8h-11z" fill="#48b0d8" stroke="#123c60" /><path d="M6 10h8M6 12.500h8" stroke="#fff" stroke-dasharray="2 1" /><path d="M.5 3h2M.5 6h2M.5 9h2M.5 12h2" stroke="#153f60" /></svg></button>
            <button aria-label="列表视图"><svg viewBox="0 0 14 16" width="14" height="16"><path d="M1.500 1.500h11v12h-11z" fill="#eef5ff" stroke="#2c5fb0" /><path d="M1 2.500h12" stroke="#3c78d8" stroke-width="3" /><path d="M3 6h2M3 8.500h2M3 11h2" stroke="#2c5fb0" stroke-width="1.500" /><path d="M6 6h5M6 8.500h5M6 11h5" stroke="#7a9cd0" /></svg></button>
          </div>
          <div class="treebox">
            <ul class="tree">
              <li v-for="(r, i) in rows" :key="i" :class="['row', 'lv' + r.level, { last: r.last }]">
                <button v-if="r.level < 2" class="expander" :aria-label="'折叠' + r.label"></button>
                <label>
                  <input v-model="r.checked" type="checkbox" />
                  <svg v-if="r.level === 0" class="ico" viewBox="0 0 18 16" width="18" height="16"><g fill="#fff" stroke="#222"><path d="M.5 .5h6l3 3v8h-9z" /><path d="M3.500 2.500h6l3 3v8h-9z" /><path d="M6.500 4.500h6l3 3v8h-9z" /></g></svg>
                  <svg v-else-if="r.level === 1" class="ico page" viewBox="0 0 13 14" width="13" height="14"><path d="M1 1h7l4 4v8H1z" fill="#fafafa" stroke="#111" stroke-width="1.500" /><path d="M7 1v5h5z" fill="#aaa" /></svg>
                  <svg v-else class="ico" viewBox="0 0 17 16" width="17" height="16"><path d="M1 12l4-5h10l-4 7H2z" fill="#b4d2e8" stroke="#2a3a48" stroke-width=".8" /><path d="M4 12l3-3h4l-2 3z" fill="#dcecf6" /><path d="M0 12l2 2.500h9.500L15 8" fill="none" stroke="#18222a" stroke-width="1.500" /><path d="M7 0v8" stroke="#2a3036" stroke-width="2" /><path d="M5 9l1-4 2-1 2 4" fill="#6c7880" stroke="#39444c" stroke-width=".8" /><path d="M11 9l5-5" stroke="#2b3a45" stroke-width="1.500" /></svg>
                  <span class="name" :class="{ sel: r.selected, file: r.level === 2 }">{{ r.label }}</span>
                </label>
              </li>
            </ul>
            <div class="sb v">
              <button class="arw up" aria-label="上移"></button>
              <div class="track"><i :style="{ flexGrow: scroll.tree[0] }"></i><b class="thumb" :style="{ flexGrow: scroll.tree[1] }"></b><i :style="{ flexGrow: scroll.tree[2] }"></i></div>
              <button class="arw down" aria-label="下移"></button>
            </div>
          </div>
        </section>

        <section class="panel attrs">
          <h2 class="phead"><span>图纸属性</span>
            <button aria-label="固定属性"><svg viewBox="0 0 9 9" width="9" height="9"><path d="M2 .5h4.500v4M2.500 .5v4M0 5h9M4.500 5v4M5.500 1v4" fill="none" stroke="#666" /></svg></button>
            <button aria-label="关闭属性"><svg viewBox="0 0 9 9" width="9" height="9"><path d="M1 1l7 7M8 1l-7 7" stroke="#666" stroke-width="1.300" /></svg></button>
          </h2>
          <div class="gridbox">
            <div class="gridclip">
              <table>
                <tbody>
                  <tr v-for="p in props" :key="p.name" :class="{ locked: p.locked }"><th scope="row">{{ p.name }}</th><td>{{ p.value }}</td></tr>
                </tbody>
              </table>
            </div>
            <div class="sb v">
              <button class="arw up" aria-label="属性上移"></button>
              <div class="track"><b class="thumb" :style="{ flexGrow: scroll.props[1] }"></b><i :style="{ flexGrow: scroll.props[2] }"></i></div>
              <button class="arw down" aria-label="属性下移"></button>
            </div>
          </div>
          <div class="desc"></div>
        </section>
      </aside>

      <main class="docs">
        <div class="tabs">
          <div class="tab">
            <svg class="slope" viewBox="0 0 24 17" width="24" height="17"><defs><linearGradient id="tabfill" x1="0" y1="0" x2="0" y2="1"><stop offset="0" stop-color="#fffca0" /><stop offset="1" stop-color="#ffdc78" /></linearGradient></defs><path d="M0 17Q5 15 10 9T20 .5H24V17z" fill="url(#tabfill)" /><path d="M0 16.500Q5 15 10 9T20 .5H24" fill="none" stroke="#8b93a3" /></svg>
            <button class="tabname">20151014-0950_BatchPrint1</button>
            <button class="tabx" aria-label="关闭文档"><svg viewBox="0 0 9 9" width="9" height="9"><path d="M1 1l7 7M8 1l-7 7" stroke="#77755a" stroke-width="1.500" /></svg></button>
          </div>
          <button class="tablist" aria-label="文档列表"></button>
        </div>
        <div class="frame">
          <div class="inner">
            <div class="canvas">
              <svg viewBox="213 136 451 523" width="451" height="523" shape-rendering="crispEdges" role="img" aria-label="拼图预览">
                <path v-for="(s, i) in shapes" :key="i" :d="s.d" :stroke="s.stroke" :fill="s.fill" :stroke-width="s.width" :stroke-dasharray="s.dash" />
              </svg>
            </div>
            <div class="sb v big">
              <button class="arw up" aria-label="视图上移"></button>
              <div class="track"><i :style="{ flexGrow: scroll.view[0] }"></i><b class="thumb" :style="{ flexGrow: scroll.view[1] }"></b><i :style="{ flexGrow: scroll.view[2] }"></i></div>
              <button class="arw down" aria-label="视图下移"></button>
            </div>
            <div class="sb h off">
              <button class="arw left" disabled aria-label="视图左移"></button>
              <div class="track"></div>
              <button class="arw right" disabled aria-label="视图右移"></button>
            </div>
            <div class="corner"></div>
          </div>
        </div>
      </main>
    </div>

    <section class="output">
      <h2 class="phead"><span>任务信息输出</span>
        <button aria-label="固定输出"><svg viewBox="0 0 9 9" width="9" height="9"><path d="M2 .5h4.500v4M2.500 .5v4M0 5h9M4.500 5v4M5.500 1v4" fill="none" stroke="#666" /></svg></button>
        <button aria-label="关闭输出"><svg viewBox="0 0 9 9" width="9" height="9"><path d="M1 1l7 7M8 1l-7 7" stroke="#666" stroke-width="1.300" /></svg></button>
      </h2>
      <div class="logrow">
        <div class="log" role="log">
          <p>正在处理文件F:\测试\打印中心测试\尧创拼图打印演示图例\103.40M.dwg... 加载成功<b>!</b></p>
          <p><span class="eq">==========</span>本次： 加载成功 文件 18 个，图纸 18 个，失败文件 0 个<span class="eq">==========</span></p>
        </div>
        <div class="sb v mini"><button class="arw up" aria-label="输出上移"></button><button class="arw down" aria-label="输出下移"></button></div>
      </div>
      <div class="logscroll">
        <div class="sb h">
          <button class="arw left" aria-label="输出左移"></button>
          <div class="track"><b class="thumb" :style="{ flexGrow: scroll.log[1] }"></b><i :style="{ flexGrow: scroll.log[2] }"></i></div>
          <button class="arw right" aria-label="输出右移"></button>
        </div>
        <div class="corner"></div>
      </div>
    </section>

    <footer class="status">
      <span class="ready">就绪</span>
      <span class="cell">CAP</span><span class="cell act">NUM</span><span class="cell end">SCRL</span>
      <svg class="sizer" viewBox="0 0 14 14" width="14" height="14"><g fill="#fff"><path d="M10 2h3v3h-3zM6 6h3v3H6zM10 6h3v3h-3zM2 10h3v3H2zM6 10h3v3H6zM10 10h3v3h-3z" /></g><g fill="#777c86"><path d="M9 1h3v3H9zM5 5h3v3H5zM9 5h3v3H9zM1 9h3v3H1zM5 9h3v3H5zM9 9h3v3H9z" /></g></svg>
    </footer>
  </div>
</template>

<style>
body { margin: 0; background: #cfd4dd; }
</style>

<style scoped>
* { box-sizing: border-box; }
.app {
  display: flex; flex-direction: column; height: 100vh; min-height: 560px; min-width: 690px;
  background: #cfd4dd; overflow: hidden;
  font: 12px/16px Roboto, "Noto Sans CJK SC", sans-serif; color: #000;
}
button { appearance: none; border: 0; background: none; padding: 0; margin: 0; font: inherit; color: inherit; display: flex; align-items: center; justify-content: center; }
h1, h2, p, ul { margin: 0; padding: 0; font-weight: normal; }
svg { display: block; flex: none; }

.titlebar {
  display: flex; align-items: center; height: 30px; flex: none; padding: 0 9px 0 8px;
  border: 1px solid #8a8b8e; border-bottom: 1px solid #b4b8c2; border-radius: 7px 7px 0 0;
  background: linear-gradient(#f4f4f5, #d9dade 15%, #cbcdd3 40%, #b5b9c3 45%, #cfd2d9 70%, #eceef3);
}
.caption { flex: 1; display: flex; justify-content: center; font-size: 13px; line-height: 20px; color: #2f6db3; }
.doc { font-family: "Liberation Mono", monospace; font-size: 12px; color: #70747c; }
.dash { margin: 0 6px 0 2px; font-family: "Liberation Mono", monospace; }
.caption span:last-child { margin-left: 8px; }
.winbtns { display: flex; gap: 11px; padding-top: 2px; }

.menubar { display: flex; align-items: center; height: 40px; flex: none; margin: 0 4px; border-bottom: 1px solid #fbfbf8; border-right: 4px solid #ece8da; padding-right: 4px; }
.grip { width: 14px; height: 34px; flex: none; background: radial-gradient(circle at 1px 1px, #8d929d 1px, transparent 1px) 4px 0 / 4px 4px repeat-y; }
.menubar .grip { margin-right: 14px; }
.menu { color: #4a4f5c; margin-right: 14px; line-height: 18px; }
.menu small { font-size: 10px; }

.toolbar { display: flex; align-items: center; height: 42px; flex: none; margin: 0 4px; background: linear-gradient(90deg, transparent 70%, #efede2), linear-gradient(#fbfaf7, #efede4); border-bottom: 1px solid #a9b0bd; }
.tool { width: 38px; height: 38px; flex: none; }
.tool svg { width: 32px; height: 32px; overflow: visible; }
.tool .wide { width: 34px; }
.tool.on { border: 1px solid #a5a9ae; border-radius: 2px; background: linear-gradient(#fbd3a0, #f8b762 38%, #fcd884 60%, #fdf3a8); }
.sep { width: 8px; height: 24px; flex: none; background: linear-gradient(#b5b7bc, #b5b7bc) 3px 0 / 1px 100% no-repeat; }
.drop { width: 13px; height: 38px; flex: none; }
.drop::after { content: ""; border: 3px solid transparent; border-top-color: #777; border-bottom: 0; }
.fill { flex: 1; }
.more { background: linear-gradient(90deg, #d0d2d8, #b2b5be); border-radius: 3px; margin-right: 4px; }

.workspace { flex: 1; min-height: 0; display: grid; grid-template-columns: 199px minmax(0, 1fr); gap: 4px; margin: 0 4px 5px 5px; }
.side { display: flex; flex-direction: column; gap: 4px; min-height: 0; padding-top: 1px; }
.panel { display: flex; flex-direction: column; min-height: 0; }
.list { flex: 1; }
.phead { display: flex; align-items: center; height: 19px; flex: none; background: #b9c0cb; font-size: 12px; line-height: 18px; color: #40444b; padding: 0 5px 0 3px; border-top: 1px solid #dfe4ec; }
.phead span { flex: 1; }
.phead button { margin-left: 8px; }
.ptools { display: flex; align-items: center; gap: 5px; height: 24px; flex: none; padding-left: 4px; background: linear-gradient(#eff3fb, #cdd4e0); }
.ptools button + button + button { margin-left: 2px; }

.treebox { flex: 1; min-height: 0; display: flex; border: 1px solid #aca899; background: #fff; overflow: hidden; border-left: 0; }
.tree { flex: 1; list-style: none; min-width: 0; overflow: hidden; }
.row {
  --dot: repeating-linear-gradient(#a5a295 0 1px, #fff 1px 2px);
  --dash: repeating-linear-gradient(90deg, #a5a295 0 1px, #fff 1px 2px);
  display: flex; align-items: center; height: 16px; padding-left: 7px; background-repeat: no-repeat;
}
.row label { display: flex; align-items: center; height: 16px; }
.lv1 { padding-left: 26px; background-image: var(--dot), var(--dash); background-position: 30px 0, 36px 8px; background-size: 1px 16px, 6px 1px; }
.lv2 { padding-left: 62px; background-image: var(--dot), var(--dot), var(--dash); background-position: 30px 0, 49px 0, 50px 8px; background-size: 1px 16px, 1px 16px, 11px 1px; }
.lv2.last { background-size: 1px 16px, 1px 9px, 11px 1px; }
.expander { width: 9px; height: 9px; border: 1px solid #7898b5; border-radius: 1px; background: linear-gradient(#000, #000) 1px 3px / 5px 1px no-repeat, linear-gradient(135deg, #fff, #c6bfb2); margin-right: 8px; flex: none; }
input { appearance: none; width: 13px; height: 13px; margin: 0; flex: none; border: 1px solid #1c5180; background: linear-gradient(135deg, #dcdcd7, #fff 80%); }
input:checked { display: grid; }
input:checked::before { content: ""; width: 3px; height: 6px; margin: 1px 0 0 4px; border: solid #21a121; border-width: 0 2px 2px 0; transform: rotate(42deg); }
.ico { margin: 0 1px; }
.ico.page { margin: 0 4px 0 3px; }
.lv2 .ico { margin-right: 2px; }
.name { line-height: 16px; padding: 0 2px 0 1px; white-space: pre; }
.name.file { font-family: "DejaVu Sans Mono", monospace; font-size: 10px; line-height: 15px; padding-left: 2px; }
.name.sel { background: #ece9d8; }

.gridbox { display: flex; height: 130px; background: #fff; }
.gridclip { flex: 1; overflow: hidden; min-width: 0; }
table { width: 100%; border-collapse: collapse; table-layout: fixed; }
th, td { height: 19px; padding: 0 0 0 3px; text-align: left; font-weight: normal; line-height: 16px; border-bottom: 1px solid #e3e7f1; white-space: nowrap; overflow: hidden; }
th { width: 100px; }
td { border-left: 1px solid #e3e7f1; padding-left: 4px; }
.locked { color: #aca899; }
.desc { height: 14px; margin-top: 5px; border: 1px solid #a3a9b5; background: #e6ebf6; flex: none; }

.sb { display: flex; background: linear-gradient(90deg, #f2f0e8, #fefefb); flex: none; }
.sb.v { flex-direction: column; width: 16px; }
.sb.h { background: linear-gradient(#f2f0e8, #fefefb); height: 17px; }
.sb.big { width: 18px; padding: 7px 0 0 1px; }
.arw { flex: none; width: 16px; height: 16px; border: 1px solid #fff; border-radius: 3px; background: linear-gradient(135deg, #dbe6ff, #b5cbfb); box-shadow: inset 0 0 0 1px #b2c5ee; }
.sb.h .arw { height: 17px; }
.sb.mini .arw { height: 15px; }
.arw::after { content: ""; width: 5px; height: 5px; border: solid #4d6185; border-width: 2px 0 0 2px; }
.up::after { transform: translateY(1px) rotate(45deg); }
.down::after { transform: translateY(-1px) rotate(225deg); }
.left::after { transform: translateX(1px) rotate(-45deg); }
.right::after { transform: translateX(-1px) rotate(135deg); }
.mini .arw::after { width: 0; height: 0; border: 4px solid transparent; border-bottom-color: #4d6185; border-top: 0; transform: none; }
.mini .down::after { transform: rotate(180deg); }
.off .arw { background: #efede3; box-shadow: inset 0 0 0 1px #d8d5c8; }
.off .arw::after { border-color: #c5c3b6; }
.track { flex: 1; display: flex; flex-direction: inherit; min-height: 0; min-width: 0; }
.track i, .track b { flex: 0 0 0; }
.thumb { border: 1px solid #fff; border-radius: 3px; box-shadow: inset 0 0 0 1px #a9c0f2; background: repeating-linear-gradient(#eef4ff 0 1px, #8cb0f8 1px 2px) center / 7px 8px no-repeat, linear-gradient(90deg, #cbdafe, #bacffb); }
.h .thumb { background: repeating-linear-gradient(90deg, #eef4ff 0 1px, #8cb0f8 1px 2px) center / 8px 7px no-repeat, linear-gradient(#cbdafe, #bacffb); }
.corner { background: #ece9d8; }

.docs { display: flex; flex-direction: column; min-width: 0; min-height: 0; }
.tabs { display: flex; align-items: flex-end; height: 20px; flex: none; background: linear-gradient(#e9ecf3, #cdd2dd); border-left: 1px solid #9aa2b0; }
.tab { display: flex; height: 17px; margin-left: 5px; }
.tabname, .tabx { background: linear-gradient(#fffca0, #ffdc78); border-top: 1px solid #8b93a3; }
.tabname { font-weight: bold; font-size: 11px; padding: 0 0 0 5px; }
.tabx { border-right: 1px solid #8b93a3; border-radius: 0 2px 0 0; padding: 3px 4px 0 9px; }
.tablist { margin: 0 6px 7px auto; }
.tablist::after { content: ""; border: 5px solid transparent; border-top-color: #666b76; border-bottom: 0; }
.frame { flex: 1; min-height: 0; display: flex; border: 1px solid #949cac; background: #fee78f; padding: 2px 3px 3px; }
.inner { flex: 1; min-width: 0; border: 1px solid #949cac; display: grid; grid-template: minmax(0, 1fr) 17px / minmax(0, 1fr) 18px; }
.canvas { background: #a0a0a0; overflow: hidden; display: flex; justify-content: center; }
.sb.off { border-left: 7px solid #e7ebf7; }

.output { margin: 0 4px 0 5px; flex: none; }
.output .phead { height: 20px; }
.logrow { display: flex; height: 30px; background: #fff; border-top: 1px solid #9b9786; }
.log { flex: 1; padding-left: 6px; overflow: hidden; white-space: pre; line-height: 14px; min-width: 0; }
.eq { font-size: 14px; line-height: 12px; }
.logscroll { display: grid; grid-template-columns: minmax(0, 1fr) 18px; }
.sb.mini { margin-right: 2px; }

.status { display: flex; align-items: center; height: 23px; flex: none; padding: 0 4px 0 8px; border: 1px solid #84878e; background: linear-gradient(#e3e5e9, #cdd0d6 20%, #b1b5bf 30%, #b8bcc5 55%, #d0d3da 85%, #a5a9b2); }
.ready { flex: 1; color: #333; }
.cell { border-left: 1px solid #8f939c; padding: 0 1px 0 3px; height: 17px; line-height: 18px; color: #92969f; font-size: 11px; }
.end { border-right: 1px solid #8f939c; }
.act { color: #30343c; }
.sizer { margin: 4px 0 0 3px; }
</style>
